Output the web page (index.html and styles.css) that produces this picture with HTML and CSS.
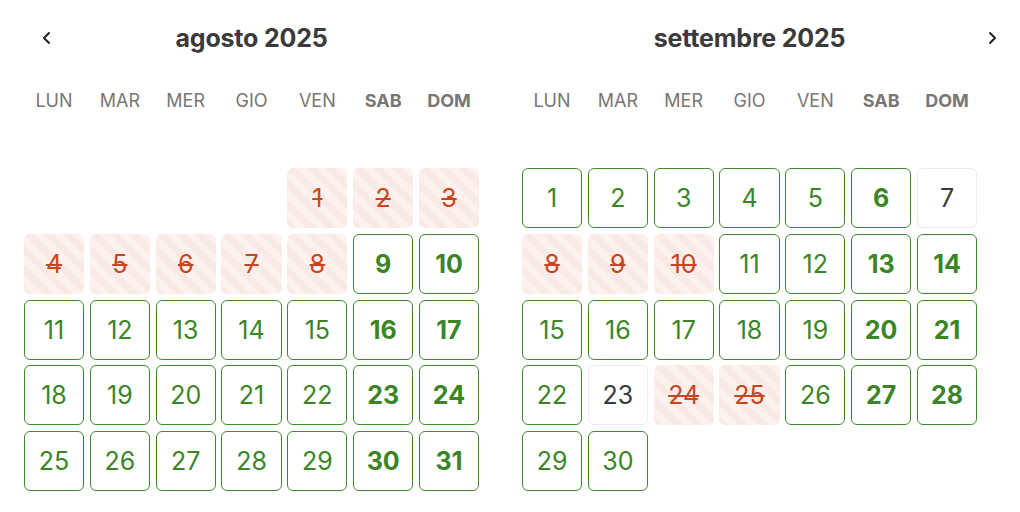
FILE: index.html
```html
<!DOCTYPE html>
<html lang="it">
<head>
<meta charset="utf-8">
<link rel="stylesheet" href="styles.css">
</head>
<body>
<div class="picker">
  <button class="nav nav-prev" aria-label="Mese precedente">
    <svg width="14" height="14" viewBox="0 0 14 14"><path d="M9 2 L4 7 L9 12" fill="none" stroke="#222" stroke-width="2" stroke-linecap="round" stroke-linejoin="round"/></svg>
  </button>
  <button class="nav nav-next" aria-label="Mese successivo">
    <svg width="14" height="14" viewBox="0 0 14 14"><path d="M5 2 L10 7 L5 12" fill="none" stroke="#222" stroke-width="2" stroke-linecap="round" stroke-linejoin="round"/></svg>
  </button>

  <section class="month">
    <h2 class="title">agosto 2025</h2>
    <div class="weekdays">
      <span>LUN</span><span>MAR</span><span>MER</span><span>GIO</span><span>VEN</span><span class="we">SAB</span><span class="we">DOM</span>
    </div>
    <div class="days">
      <span class="empty"></span><span class="empty"></span><span class="empty"></span><span class="empty"></span>
      <span class="day off">1</span><span class="day off">2</span><span class="day off">3</span>
      <span class="day off">4</span><span class="day off">5</span><span class="day off">6</span><span class="day off">7</span><span class="day off">8</span><span class="day ok we">9</span><span class="day ok we">10</span>
      <span class="day ok">11</span><span class="day ok">12</span><span class="day ok">13</span><span class="day ok">14</span><span class="day ok">15</span><span class="day ok we">16</span><span class="day ok we">17</span>
      <span class="day ok">18</span><span class="day ok">19</span><span class="day ok">20</span><span class="day ok">21</span><span class="day ok">22</span><span class="day ok we">23</span><span class="day ok we">24</span>
      <span class="day ok">25</span><span class="day ok">26</span><span class="day ok">27</span><span class="day ok">28</span><span class="day ok">29</span><span class="day ok we">30</span><span class="day ok we">31</span>
    </div>
  </section>

  <section class="month">
    <h2 class="title">settembre 2025</h2>
    <div class="weekdays">
      <span>LUN</span><span>MAR</span><span>MER</span><span>GIO</span><span>VEN</span><span class="we">SAB</span><span class="we">DOM</span>
    </div>
    <div class="days">
      <span class="day ok">1</span><span class="day ok">2</span><span class="day ok">3</span><span class="day ok">4</span><span class="day ok">5</span><span class="day ok we">6</span><span class="day na">7</span>
      <span class="day off">8</span><span class="day off">9</span><span class="day off">10</span><span class="day ok">11</span><span class="day ok">12</span><span class="day ok we">13</span><span class="day ok we">14</span>
      <span class="day ok">15</span><span class="day ok">16</span><span class="day ok">17</span><span class="day ok">18</span><span class="day ok">19</span><span class="day ok we">20</span><span class="day ok we">21</span>
      <span class="day ok">22</span><span class="day na">23</span><span class="day off">24</span><span class="day off">25</span><span class="day ok">26</span><span class="day ok we">27</span><span class="day ok we">28</span>
      <span class="day ok">29</span><span class="day ok">30</span>
    </div>
  </section>
</div>
</body>
</html>
```

FILE: styles.css
```css
* { box-sizing: border-box; }
html, body { margin: 0; padding: 0; background: #fff; }
body { font-family: Inter, "Liberation Sans", sans-serif; }

.picker {
  position: relative;
  display: flex;
  gap: 43px;
  padding: 0 0 0 24px;
  width: 1020px;
}

.nav {
  position: absolute;
  top: 28px;
  width: 20px;
  height: 20px;
  padding: 0;
  border: 0;
  background: none;
  display: flex;
  align-items: center;
  justify-content: center;
}
.nav-prev { left: 37px; }
.nav-next { left: 982px; }

.month { width: 455px; }

.title {
  margin: 0;
  height: 76px;
  display: flex;
  align-items: center;
  justify-content: center;
  font-family: Inter, "Noto Sans", sans-serif;
  font-weight: 700;
  font-size: 25px;
  color: #3a3a3a;
  letter-spacing: -0.2px;
}

.weekdays {
  display: grid;
  grid-template-columns: repeat(7, 1fr);
  column-gap: 5.8px;
  height: 48px;
  align-items: center;
  margin-bottom: 44px;
}
.weekdays span {
  text-align: center;
  font-size: 18px;
  color: #7a7672;
  font-weight: 400;
}
.weekdays span.we { font-weight: 700; }

.days {
  display: grid;
  grid-template-columns: repeat(7, 1fr);
  grid-auto-rows: 60px;
  gap: 5.8px;
}
.day {
  display: flex;
  align-items: center;
  justify-content: center;
  border-radius: 6px;
  font-size: 25px;
  font-weight: 400;
}
.day.ok {
  border: 1px solid #3f8b2c;
  color: #3b8526;
}
.day.we { font-weight: 700; }
.day.na {
  border: 1px solid #ececec;
  color: #3a3a3a;
}
.day.off {
  color: #c8461f;
  text-decoration: line-through;
  text-decoration-thickness: 2px;
  background: repeating-linear-gradient(45deg, #faeae6 0 7px, #fcf1ee 7px 14px);
}
```
